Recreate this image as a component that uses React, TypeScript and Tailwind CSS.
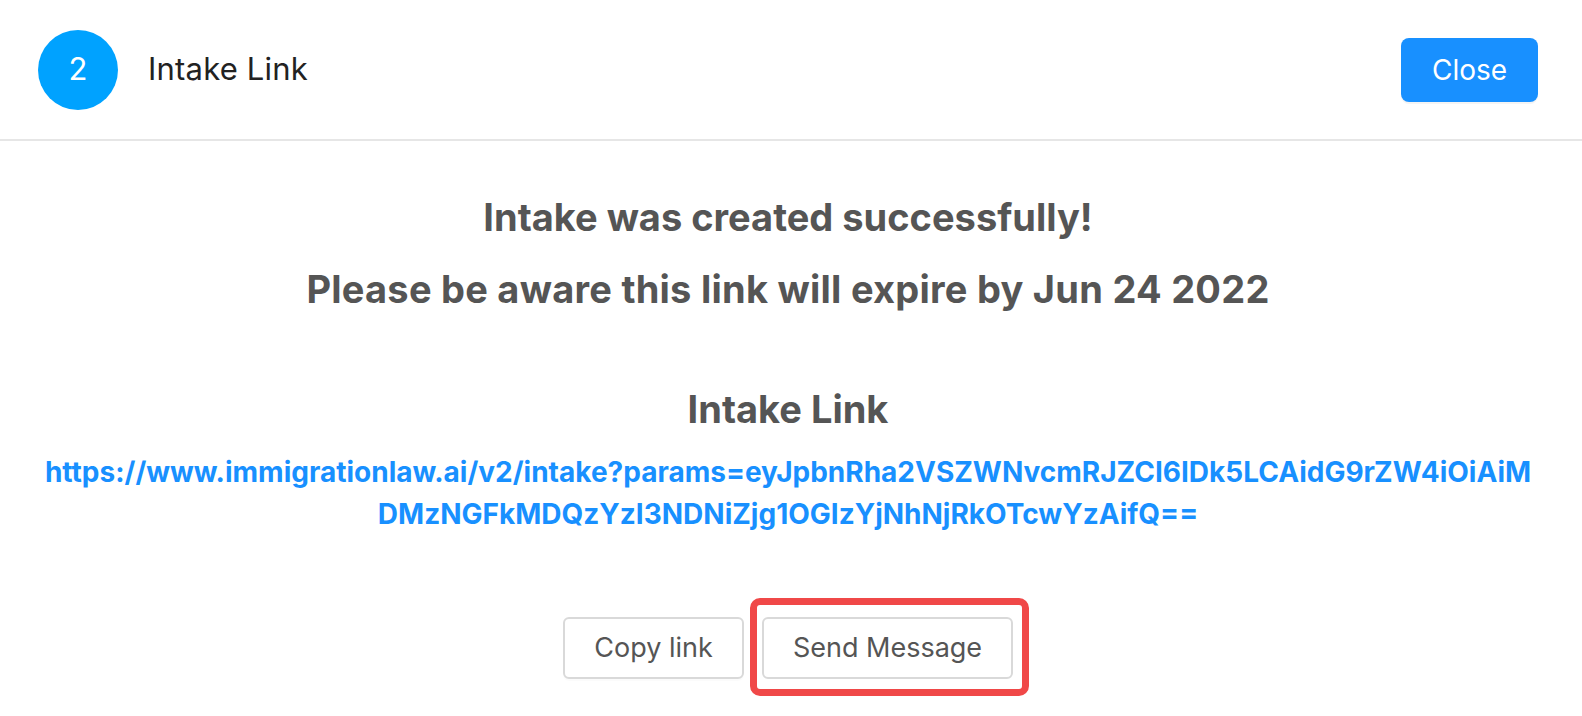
import React from "react";

export default function App() {
  const font = { fontFamily: "Inter, 'Noto Sans', sans-serif" };
  return (
    <div className="w-[1582px] h-[716px] bg-white overflow-hidden" style={font}>
      <div className="h-[141px] flex items-center justify-between pl-[38px] pr-[44px] border-b-2 border-[#e6e6e6]">
        <div className="flex items-center gap-[30px]">
          <div className="w-[80px] h-[80px] rounded-full bg-[#00a2ff] flex items-center justify-center text-white text-[31px]">
            2
          </div>
          <div className="text-[31px] text-[#222] tracking-[0.2px]">Intake Link</div>
        </div>
        <button className="w-[137px] h-[64px] rounded-[8px] bg-[#1890ff] text-white text-[28px] shadow-[0_2px_0_rgba(0,0,0,0.045)]">
          Close
        </button>
      </div>
      <div className="flex flex-col items-center text-center pr-[6px]">
        <div className="mt-[40px] text-[38px] leading-[72px] font-bold text-[#555]">
          Intake was created successfully!
        </div>
        <div className="text-[38px] leading-[72px] font-bold text-[#555] tracking-[0.25px]">
          Please be aware this link will expire by Jun 24 2022
        </div>
        <div className="mt-[56px] text-[38px] leading-[56px] font-bold text-[#555]">
          Intake Link
        </div>
        <div className="mt-[14px] text-[28px] leading-[42px] font-bold text-[#1890ff]">
          <div>https://www.immigrationlaw.ai/v2/intake?params=eyJpbnRha2VSZWNvcmRJZCI6IDk5LCAidG9rZW4iOiAiM</div>
          <div>DMzNGFkMDQzYzI3NDNiZjg1OGIzYjNhNjRkOTcwYzAifQ==</div>
        </div>
        <div className="mt-[82px] flex items-center gap-[18px]">
          <button className="w-[181px] h-[62px] rounded-[6px] border-2 border-[#d9d9d9] bg-white text-[27px] text-[#555] shadow-[0_2px_0_rgba(0,0,0,0.016)]">
            Copy link
          </button>
          <div className="relative">
            <button className="w-[251px] h-[62px] rounded-[6px] border-2 border-[#d9d9d9] bg-white text-[27px] text-[#555]">
              Send Message
            </button>
            <div className="absolute left-[-12px] right-[-16px] top-[-19px] bottom-[-17px] border-[7px] border-[#f04848] rounded-[10px] pointer-events-none" />
          </div>
        </div>
      </div>
    </div>
  );
}
